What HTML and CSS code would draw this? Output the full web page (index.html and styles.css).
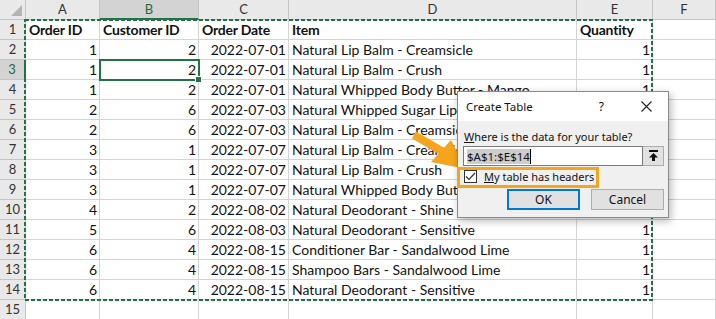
FILE: index.html
```html
<!DOCTYPE html>
<html lang="en">
<head>
    <meta charset="UTF-8">
    <title>Create Table</title>
    <link rel="stylesheet" href="styles.css">
</head>
<body>
    <div class="sheet">
        <div class="row head">
            <div class="corner"><span class="tri"></span></div>
            <div class="col">A</div>
            <div class="col sel">B</div>
            <div class="col">C</div>
            <div class="col">D</div>
            <div class="col">E</div>
            <div class="col">F</div>
        </div>
        <div class="row">
            <div class="num">1</div>
            <div class="cell b">Order ID</div>
            <div class="cell b">Customer ID</div>
            <div class="cell b">Order Date</div>
            <div class="cell b">Item</div>
            <div class="cell b">Quantity</div>
            <div class="cell"></div>
        </div>
        <div class="row">
            <div class="num">2</div>
            <div class="cell r">1</div><div class="cell r">2</div><div class="cell r">2022-07-01</div>
            <div class="cell">Natural Lip Balm - Creamsicle</div><div class="cell r">1</div><div class="cell"></div>
        </div>
        <div class="row">
            <div class="num sel">3</div>
            <div class="cell r">1</div><div class="cell r active">2</div><div class="cell r">2022-07-01</div>
            <div class="cell">Natural Lip Balm - Crush</div><div class="cell r">1</div><div class="cell"></div>
        </div>
        <div class="row">
            <div class="num">4</div>
            <div class="cell r">1</div><div class="cell r">2</div><div class="cell r">2022-07-01</div>
            <div class="cell">Natural Whipped Body Butter - Mango</div><div class="cell r">1</div><div class="cell"></div>
        </div>
        <div class="row">
            <div class="num">5</div>
            <div class="cell r">2</div><div class="cell r">6</div><div class="cell r">2022-07-03</div>
            <div class="cell">Natural Whipped Sugar Lip Scrub - Creamsicle</div><div class="cell r">1</div><div class="cell"></div>
        </div>
        <div class="row">
            <div class="num">6</div>
            <div class="cell r">2</div><div class="cell r">6</div><div class="cell r">2022-07-03</div>
            <div class="cell">Natural Lip Balm - Creamsicle</div><div class="cell r">1</div><div class="cell"></div>
        </div>
        <div class="row">
            <div class="num">7</div>
            <div class="cell r">3</div><div class="cell r">1</div><div class="cell r">2022-07-07</div>
            <div class="cell">Natural Lip Balm - Creamsicle</div><div class="cell r">1</div><div class="cell"></div>
        </div>
        <div class="row">
            <div class="num">8</div>
            <div class="cell r">3</div><div class="cell r">1</div><div class="cell r">2022-07-07</div>
            <div class="cell">Natural Lip Balm - Crush</div><div class="cell r">1</div><div class="cell"></div>
        </div>
        <div class="row">
            <div class="num">9</div>
            <div class="cell r">3</div><div class="cell r">1</div><div class="cell r">2022-07-07</div>
            <div class="cell">Natural Whipped Body Butter - Mango</div><div class="cell r">1</div><div class="cell"></div>
        </div>
        <div class="row">
            <div class="num">10</div>
            <div class="cell r">4</div><div class="cell r">2</div><div class="cell r">2022-08-02</div>
            <div class="cell">Natural Deodorant - Shine</div><div class="cell r">1</div><div class="cell"></div>
        </div>
        <div class="row">
            <div class="num">11</div>
            <div class="cell r">5</div><div class="cell r">6</div><div class="cell r">2022-08-03</div>
            <div class="cell">Natural Deodorant - Sensitive</div><div class="cell r">1</div><div class="cell"></div>
        </div>
        <div class="row">
            <div class="num">12</div>
            <div class="cell r">6</div><div class="cell r">4</div><div class="cell r">2022-08-15</div>
            <div class="cell">Conditioner Bar - Sandalwood Lime</div><div class="cell r">1</div><div class="cell"></div>
        </div>
        <div class="row">
            <div class="num">13</div>
            <div class="cell r">6</div><div class="cell r">4</div><div class="cell r">2022-08-15</div>
            <div class="cell">Shampoo Bars - Sandalwood Lime</div><div class="cell r">1</div><div class="cell"></div>
        </div>
        <div class="row">
            <div class="num">14</div>
            <div class="cell r">6</div><div class="cell r">4</div><div class="cell r">2022-08-15</div>
            <div class="cell">Natural Deodorant - Sensitive</div><div class="cell r">1</div><div class="cell"></div>
        </div>
        <div class="row">
            <div class="num">15</div>
            <div class="cell"></div><div class="cell"></div><div class="cell"></div>
            <div class="cell"></div><div class="cell"></div><div class="cell"></div>
        </div>

        <!-- copy range marching ants -->
        <svg class="ants" width="630" height="283" viewBox="0 0 630 283">
            <rect x="1" y="1" width="627" height="280" fill="none" stroke="#217346" stroke-width="2" stroke-dasharray="4 2"/>
        </svg>

        <svg class="arrow" width="70" height="50" viewBox="400 124 70 50">
            <line x1="414" y1="135" x2="445" y2="153" stroke="#f4a51c" stroke-width="8"/>
            <polygon points="431,162 451,140 466,169" fill="#f4a51c"/>
        </svg>

        <div class="dialog">
            <div class="dlg-title">
                <span class="dlg-name">Create Table</span>
                <span class="help">?</span>
                <svg class="close" width="11" height="11" viewBox="0 0 11 11">
                    <path d="M0.5 0.5 L10.5 10.5 M10.5 0.5 L0.5 10.5" stroke="#222" stroke-width="1.1"/>
                </svg>
            </div>
            <div class="dlg-body">
                <div class="dlg-label"><u>W</u>here is the data for your table?</div>
                <div class="range-row">
                    <div class="range-input"><span class="picked">$A$1:$E$14</span><span class="caret"></span></div>
                    <div class="range-btn">
                        <svg width="11" height="12" viewBox="0 0 11 12">
                            <rect x="1" y="0" width="9" height="2" fill="#111"/>
                            <path d="M5.5 3 L10 7.5 L7 7.5 L7 11 L4 11 L4 7.5 L1 7.5 Z" fill="#111"/>
                        </svg>
                    </div>
                </div>
                <div class="hdr-check">
                    <span class="checkbox">
                        <svg width="11" height="11" viewBox="0 0 11 11">
                            <path d="M1 5.5 L4 8.5 L10 2" fill="none" stroke="#333" stroke-width="1.2"/>
                        </svg>
                    </span>
                    <span><u>M</u>y table has headers</span>
                </div>
                <div class="dlg-buttons">
                    <button class="btn ok">OK</button>
                    <button class="btn">Cancel</button>
                </div>
            </div>
            <div class="callout"></div>
        </div>
    </div>
</body>
</html>
```

FILE: styles.css
```css
body {
    margin: 0;
    background: #fff;
    font-family: Lato, "Liberation Sans", sans-serif;
}
.sheet {
    position: relative;
    width: 716px;
    height: 319px;
    overflow: hidden;
}
.row {
    display: grid;
    grid-template-columns: 26px 74px 99px 90px 288px 76px 1fr;
    height: 20px;
}
.row > div {
    box-sizing: border-box;
    border-right: 1px solid #d4d4d4;
    border-bottom: 1px solid #d4d4d4;
    overflow: hidden;
    white-space: nowrap;
}
.head > div {
    background: #e9e9e9;
    border-right-color: #c4c4c4;
    border-bottom-color: #c4c4c4;
    color: #333;
    font-size: 13px;
    line-height: 19px;
    text-align: center;
}
.corner {
    position: relative;
}
.tri {
    position: absolute;
    right: 3px;
    bottom: 3px;
    border-style: solid;
    border-width: 0 0 11px 11px;
    border-color: transparent transparent #b4b4b4 transparent;
}
.head .sel {
    background: #d3d3d3;
    color: #1e6b40;
    border-bottom: 2px solid #217346;
}
.num {
    background: #e9e9e9;
    border-right-color: #c4c4c4 !important;
    border-bottom-color: #c4c4c4 !important;
    color: #333;
    font-size: 13px;
    line-height: 19px;
    text-align: center;
}
.num.sel {
    background: #d3d3d3;
    color: #1e6b40;
    border-right: 2px solid #217346 !important;
}
.cell {
    font-size: 14px;
    line-height: 19px;
    color: #111;
    padding: 0 2px 0 3px;
}
.cell.b {
    font-weight: bold;
    letter-spacing: -0.2px;
}
.cell.r {
    text-align: right;
}
.cell.active {
    position: relative;
    overflow: visible;
    outline: 2px solid #217346;
    outline-offset: -1px;
}
.cell.active::after {
    content: "";
    position: absolute;
    right: -4px;
    bottom: -4px;
    width: 5px;
    height: 5px;
    background: #217346;
    border: 1px solid #fff;
}
.ants {
    position: absolute;
    left: 24px;
    top: 19px;
}
.arrow {
    position: absolute;
    left: 400px;
    top: 124px;
}

.dialog {
    position: absolute;
    left: 457px;
    top: 91px;
    width: 212px;
    box-sizing: border-box;
    border: 1px solid #8a8a8a;
    background: #f0f0f0;
    box-shadow: 2px 3px 8px rgba(0, 0, 0, 0.28);
    font-family: "Noto Sans", sans-serif;
    font-size: 11px;
    color: #111;
}
.dlg-title {
    display: flex;
    align-items: center;
    height: 29px;
    padding: 0 0 0 8px;
    background: #fff;
    font-size: 11.5px;
}
.dlg-name {
    flex: 1;
}
.help {
    margin-right: 37px;
    font-size: 12px;
}
.close {
    margin-right: 16px;
}
.dlg-body {
    padding: 8px 4px 7px 5px;
}
.dlg-label {
    line-height: 16px;
    padding-left: 1px;
    margin-bottom: 1px;
}
.range-row {
    display: flex;
    height: 20px;
}
.range-input {
    flex: 1;
    box-sizing: border-box;
    border: 1px solid #7a7a7a;
    background: #fff;
    display: flex;
    align-items: center;
    padding-left: 3px;
    font-size: 11.5px;
}
.picked {
    background: #cdcdcd;
    line-height: 15px;
}
.caret {
    width: 1px;
    height: 15px;
    background: #000;
}
.range-btn {
    width: 21px;
    box-sizing: border-box;
    border: 1px solid #adadad;
    border-left: none;
    background: #e1e1e1;
    display: flex;
    align-items: center;
    justify-content: center;
}
.hdr-check {
    display: flex;
    align-items: center;
    gap: 7px;
    height: 21px;
    padding-left: 1px;
    font-size: 11px;
}
.checkbox {
    width: 13px;
    height: 13px;
    box-sizing: border-box;
    border: 1px solid #333;
    background: #fff;
    display: flex;
    align-items: center;
    justify-content: center;
}
.dlg-buttons {
    display: flex;
    justify-content: flex-end;
    gap: 11px;
    margin-top: 2px;
}
.btn {
    width: 73px;
    height: 21px;
    box-sizing: border-box;
    border: 1px solid #adadad;
    background: #e1e1e1;
    font-family: "Noto Sans", sans-serif;
    font-size: 12px;
    color: #111;
    padding: 0;
}
.btn.ok {
    border: 2px solid #0078d7;
}
.callout {
    position: absolute;
    left: -1px;
    top: 75px;
    width: 142px;
    height: 21px;
    box-sizing: border-box;
    border: 3px solid #f4a51c;
}
```
